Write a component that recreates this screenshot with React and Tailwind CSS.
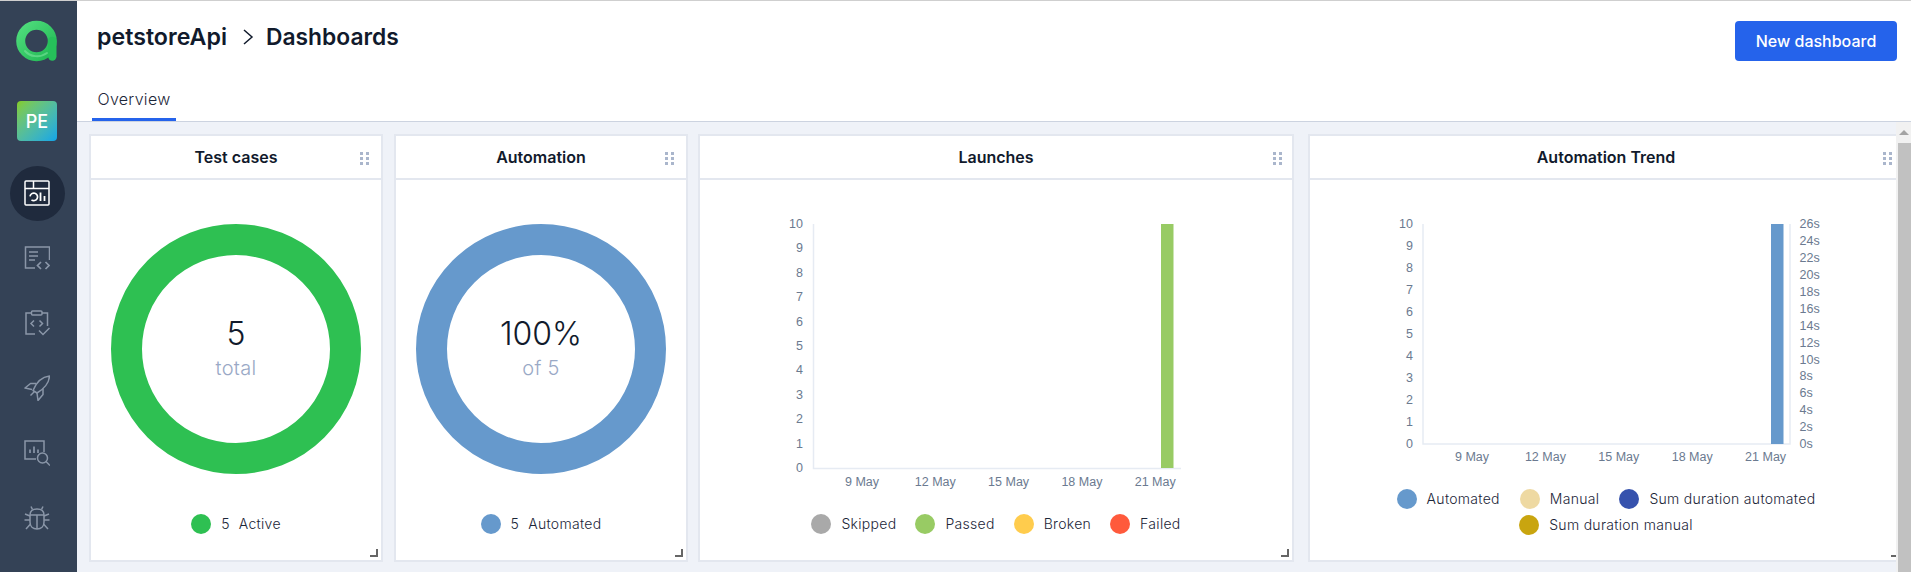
import React from "react";

const FONT = { fontFamily: "Inter, 'Noto Sans', sans-serif" };

function Logo() {
  return (
    <svg width="42" height="42" viewBox="0 0 42 42" fill="none" className="shrink-0">
      <defs>
        <linearGradient id="logoGrad" x1="0" y1="0" x2="1" y2="1">
          <stop offset="0" stopColor="#4fdc7c" />
          <stop offset="1" stopColor="#22b955" />
        </linearGradient>
      </defs>
      <circle cx="20.500" cy="21" r="15.800" stroke="url(#logoGrad)" strokeWidth="9" />
      <path d="M36.300 21V36.500" stroke="#26c05a" strokeWidth="8.400" strokeLinecap="round" />
      <path d="M9 31C14 37 24 38 31 33" stroke="#7be29c" strokeWidth="2" strokeLinecap="round" opacity="0.6" />
    </svg>
  );
}

function DashboardIcon() {
  return (
    <svg width="26" height="26" viewBox="0 0 26 26" fill="none" stroke="#fff" strokeWidth="1.500">
      <rect x="1" y="1" width="24" height="24" rx="1" />
      <path d="M1 8.500H25M9.500 1V8.500" />
      <path d="M6 16.300a3.800 3.800 0 1 1 1.500 3.600" strokeWidth="1.700" />
      <path d="M16.500 12.500V21" strokeWidth="1.800" />
      <path d="M20.500 16V21" strokeWidth="1.800" />
    </svg>
  );
}

function CodeIcon() {
  return (
    <svg width="26" height="26" viewBox="0 0 26 26" fill="none" stroke="#8a96a8" strokeWidth="1.500">
      <path d="M11 23H1.500V2H25.500V15" />
      <path d="M5 7H14M5 11H14M5 15H11" />
      <path d="M17 17L13.500 20.500L17 24M21.500 17L25 20.500L21.500 24" strokeWidth="1.700" />
    </svg>
  );
}

function ClipboardIcon() {
  return (
    <svg width="26" height="26" viewBox="0 0 26 26" fill="none" stroke="#8a96a8" strokeWidth="1.500">
      <path d="M7.500 3H2V24H11M18 3H23.500V16" />
      <rect x="7.500" y="1" width="10.500" height="4" rx="1" />
      <path d="M10 10.500L7 13.500L10 16.500M15.500 10.500L18.500 13.500L15.500 16.500" />
      <path d="M15 20.500L19 24.500L25.500 18" />
    </svg>
  );
}

function RocketIcon() {
  return (
    <svg width="26" height="26" viewBox="0 0 26 26" fill="none" stroke="#8a96a8" strokeWidth="1.500" strokeLinejoin="round">
      <path d="M9 15.500C12 8 17 2 25.500 1C25 9 19 14.500 13 18Z" />
      <path d="M12 8.500H6.500L1 13L8 14.500" />
      <path d="M19 13.500V19.500L14 25.500L13 18" />
      <path d="M6.500 20.500L10.500 16.500" />
    </svg>
  );
}

function ReportIcon() {
  return (
    <svg width="26" height="26" viewBox="0 0 26 26" fill="none" stroke="#8a96a8" strokeWidth="1.500">
      <path d="M12 19H1V1H20V12" />
      <path d="M6 9.500V13M10 6.500V13M14 9.500V13" strokeWidth="1.700" />
      <circle cx="18.500" cy="18" r="5" />
      <path d="M22 21.500L26 25.500" />
    </svg>
  );
}

function BugIcon() {
  return (
    <svg width="26" height="26" viewBox="0 0 26 26" fill="none" stroke="#8a96a8" strokeWidth="1.500">
      <path d="M6 10C6 6 9 4 13 4C17 4 20 6 20 10V17C20 21.500 17 24 13 24C9 24 6 21.500 6 17Z" />
      <path d="M6 10H20M13 10V24" />
      <path d="M8.500 4.500L7 1.500M17.500 4.500L19 1.500" />
      <path d="M6 11L1 9M20 11L25 9M6 15H0.500M20 15H25.500M6.500 19L2 24M19.500 19L24 24" />
    </svg>
  );
}

function DragHandle({ className }) {
  return (
    <div className={`absolute top-[16px] grid grid-cols-2 gap-x-[3px] gap-y-[2px] ${className}`}>
      {[0, 1, 2, 3, 4, 5].map((i) => (
        <span key={i} className="w-[3px] h-[3px] bg-[#aab6cc]" />
      ))}
    </div>
  );
}

function Card({ title, className, handleClass = "right-[10px]", children }) {
  return (
    <div className={`relative h-[428px] shrink-0 bg-white border-2 border-[#e3e7ef] flex flex-col ${className}`}>
      <div className="h-[44px] shrink-0 border-b-2 border-[#e3e7ef] flex items-center justify-center text-[16px] font-semibold text-[#111a2c]">
        {title}
      </div>
      <DragHandle className={handleClass} />
      {children}
      <div className="absolute right-[3px] bottom-[3px] w-[8px] h-[8px] border-r-2 border-b-2 border-[#666]" />
    </div>
  );
}

function LegendItem({ color, children }) {
  return (
    <div className="flex items-center gap-[10px] text-[14px] font-light tracking-[0.3px] text-[#1c2638] leading-[20px]">
      <span className="w-[20px] h-[20px] rounded-full" style={{ backgroundColor: color }} />
      <span>{children}</span>
    </div>
  );
}

function Donut({ color, value, label }) {
  return (
    <svg width="290" height="334" className="block shrink-0">
      <circle cx="145" cy="169" r="109.500" fill="none" stroke={color} strokeWidth="31" />
      <text x="145" y="165" textAnchor="middle" fontSize="32" fontWeight="300" fill="#111a2c">{value}</text>
      <text x="145" y="195" textAnchor="middle" fontSize="20" fontWeight="300" letterSpacing="0.3" fill="#9aa9c6">{label}</text>
    </svg>
  );
}

const xLabels = ["9 May", "12 May", "15 May", "18 May", "21 May"];
const yTicks = [0, 1, 2, 3, 4, 5, 6, 7, 8, 9, 10];

function LaunchesChart() {
  return (
    <svg width="592" height="334" className="block shrink-0" fontFamily="'Liberation Sans', sans-serif" fontSize="12.5" fill="#6b7a90">
      <path d="M113.500 44V288.500H481" stroke="#e6ebf3" strokeWidth="1.500" fill="none" />
      <rect x="461" y="44" width="12.500" height="244" fill="#98cb64" />
      {yTicks.map((t) => (
        <text key={t} x="103" y={288 - t * 24.4 + 4} textAnchor="end">{t}</text>
      ))}
      {xLabels.map((l, i) => (
        <text key={l} x={162 + i * 73.3} y="306" textAnchor="middle">{l}</text>
      ))}
    </svg>
  );
}

function TrendChart() {
  const secs = [0, 2, 4, 6, 8, 10, 12, 14, 16, 18, 20, 22, 24, 26];
  return (
    <svg width="592" height="309" className="block shrink-0" fontFamily="'Liberation Sans', sans-serif" fontSize="12.5" fill="#6b7a90">
      <path d="M113 44V264H480V44" stroke="#e6ebf3" strokeWidth="1.500" fill="none" />
      <rect x="461" y="44" width="12.500" height="220" fill="#6699cc" />
      {yTicks.map((t) => (
        <text key={t} x="103" y={264 - t * 22 + 4} textAnchor="end">{t}</text>
      ))}
      {secs.map((s, i) => (
        <text key={s} x="489.500" y={264 - i * 16.9 + 4}>{s}s</text>
      ))}
      {xLabels.map((l, i) => (
        <text key={l} x={162 + i * 73.4} y="281" textAnchor="middle">{l}</text>
      ))}
    </svg>
  );
}

export default function App() {
  return (
    <div className="h-screen w-full flex overflow-hidden bg-white border-t border-[#cfcfcf]" style={FONT}>
      {/* Sidebar */}
      <aside className="w-[77px] shrink-0 bg-[#344256] flex flex-col items-center pr-[3px]">
        <div className="mt-[19px] h-[42px] shrink-0 flex items-center justify-center">
          <Logo />
        </div>
        <div className="mt-[39px] w-[40px] h-[40px] shrink-0 rounded-[4px] bg-gradient-to-br from-[#84cc16] to-[#0ea5e9] flex items-center justify-center text-white text-[18px] font-medium">
          PE
        </div>
        <div className="mt-[39px] shrink-0 flex flex-col items-center gap-[39px]">
          <div className="relative w-[26px] h-[26px]">
            <div className="absolute -inset-[14.5px] rounded-full bg-[#1f2a3d]" />
            <div className="relative"><DashboardIcon /></div>
          </div>
          <CodeIcon />
          <ClipboardIcon />
          <RocketIcon />
          <ReportIcon />
          <BugIcon />
        </div>
      </aside>

      <div className="flex-1 min-w-0 flex flex-col">
        {/* Header */}
        <header className="h-[121px] shrink-0 border-b border-[#ccd3e0] flex flex-col">
          <div className="flex-1 flex items-start justify-between pl-[20px] pr-[14px]">
            <div className="mt-[20px] flex items-center font-semibold text-[#111a2c] leading-[32px]">
              <span className="text-[23.2px]">petstoreApi</span>
              <svg width="12" height="16" viewBox="0 0 12 16" fill="none" stroke="#111a2c" strokeWidth="1.500" className="ml-[15px] mr-[12px]">
                <path d="M2 1L10 8L2 15" />
              </svg>
              <span className="text-[22.8px]">Dashboards</span>
            </div>
            <button className="mt-[20px] w-[162px] h-[40px] rounded-[4px] bg-[#2563eb] text-white text-[16px] font-medium">
              New dashboard
            </button>
          </div>
          <div className="flex pl-[15px]">
            <div className="w-[84px] h-[32px] border-b-[3px] border-[#2563eb] text-center text-[16px] font-light tracking-[0.3px] text-[#1c2638] leading-[20px]">
              Overview
            </div>
          </div>
        </header>

        {/* Widgets */}
        <div className="flex-1 min-h-0 flex bg-[#eff2f8]">
          <main className="flex-1 min-w-0 flex overflow-hidden pl-[12px] pt-[12px]">
            <Card title="Test cases" className="w-[294px]" handleClass="right-[12px]">
              <Donut color="#2ec052" value="5" label="total" />
              <div className="flex justify-center">
                <LegendItem color="#2ec052"><span className="mr-[9px]">5</span>Active</LegendItem>
              </div>
            </Card>
            <Card title="Automation" className="w-[294px] ml-[11px]" handleClass="right-[12px]">
              <Donut color="#6699cc" value="100%" label="of 5" />
              <div className="flex justify-center">
                <LegendItem color="#6699cc"><span className="mr-[9px]">5</span>Automated</LegendItem>
              </div>
            </Card>
            <Card title="Launches" className="w-[596px] ml-[10px]">
              <LaunchesChart />
              <div className="flex justify-center gap-[19px]">
                <LegendItem color="#a9a9a9">Skipped</LegendItem>
                <LegendItem color="#98cb64">Passed</LegendItem>
                <LegendItem color="#ffcc4d">Broken</LegendItem>
                <LegendItem color="#ff5a3c">Failed</LegendItem>
              </div>
            </Card>
            <Card title="Automation Trend" className="w-[596px] ml-[14px]">
              <TrendChart />
              <div className="flex flex-wrap justify-center gap-x-[20px] gap-y-[6px] px-[60px]">
                <LegendItem color="#6699cc">Automated</LegendItem>
                <LegendItem color="#eed9a2">Manual</LegendItem>
                <LegendItem color="#3652ad">Sum duration automated</LegendItem>
                <LegendItem color="#c9a50f">Sum duration manual</LegendItem>
              </div>
            </Card>
          </main>
          {/* Scrollbar */}
          <div className="w-[15px] shrink-0 bg-[#f1f1f1] flex flex-col">
            <div className="h-[21px] flex items-center justify-center">
              <span className="w-0 h-0 border-x-[5px] border-x-transparent border-b-[5px] border-b-[#a3a3a3]" />
            </div>
            <div className="flex-1 ml-[2px] bg-[#c1c1c1]" />
          </div>
        </div>
      </div>
    </div>
  );
}
